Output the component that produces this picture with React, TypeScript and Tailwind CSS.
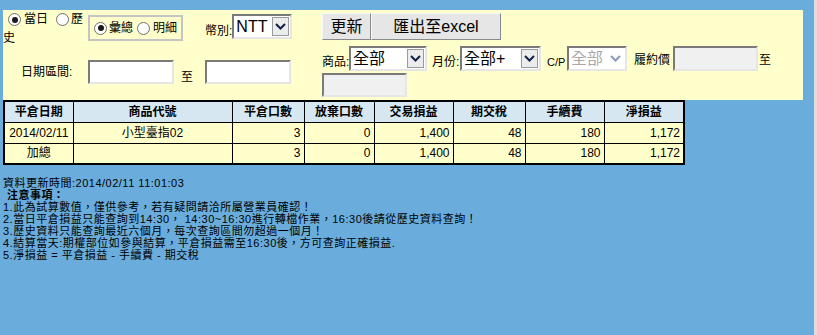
import React from "react";

function Radio({ checked }: { checked?: boolean }) {
  return (
    <span className="inline-flex w-[13px] h-[13px] rounded-full border border-[#6f6f6f] bg-white items-center justify-center align-middle shrink-0">
      {checked && <span className="w-[6px] h-[6px] rounded-full bg-[#1a1a1a]" />}
    </span>
  );
}

function Chevron({ color = "#10204a" }: { color?: string }) {
  return (
    <svg width="11" height="7" viewBox="0 0 11 7">
      <polyline points="1,1 5.5,5.5 10,1" fill="none" stroke={color} strokeWidth="2" />
    </svg>
  );
}

function Select({ w, value, disabled }: { w: string; value: string; disabled?: boolean }) {
  return (
    <div
      className={`${w} h-[25px] flex items-center bg-white border-2 border-t-[#7a7a7a] border-l-[#7a7a7a] border-b-[#e6e6e6] border-r-[#e6e6e6] shrink-0`}
    >
      <span className={`flex-1 pl-[2px] text-[16px] leading-[18px] whitespace-nowrap overflow-hidden ${disabled ? "text-[#a8a8a8]" : "text-black"}`}>
        {value}
      </span>
      {disabled ? (
        <span className="w-[17px] h-[19px] mr-[1px] flex items-center justify-center">
          <Chevron color="#8a9ab8" />
        </span>
      ) : (
        <span className="w-[17px] h-[19px] mr-[1px] flex items-center justify-center bg-[#ececec] border border-[#9a9a9a]">
          <Chevron />
        </span>
      )}
    </div>
  );
}

function TextInput({ w, disabled, h = "h-[24px]" }: { w: string; disabled?: boolean; h?: string }) {
  return (
    <div
      className={`${w} ${h} shrink-0 border-2 border-t-[#7a7a7a] border-l-[#7a7a7a] border-b-[#e6e6e6] border-r-[#e6e6e6] ${disabled ? "bg-[#f0f0f0]" : "bg-white"}`}
    />
  );
}

const headers = ["平倉日期", "商品代號", "平倉口數", "放棄口數", "交易損益", "期交稅", "手續費", "淨損益"];
const widths = ["w-[69px]", "w-[159px]", "w-[72px]", "w-[70px]", "w-[79px]", "w-[72px]", "w-[79px]", "w-[80px]"];
const rows = [
  ["2014/02/11", "小型臺指02", "3", "0", "1,400", "48", "180", "1,172"],
  ["加總", "", "3", "0", "1,400", "48", "180", "1,172"],
];

export default function App() {
  return (
    <div className="flex w-[817px] h-[335px] bg-[#6aaddc] font-['Liberation_Sans','Noto_Sans_CJK_TC',sans-serif] text-black overflow-hidden">
      <div className="flex-1 pl-[3px] pt-[10px]">
        {/* Query panel */}
        <div className="w-[800px] h-[90px] bg-[#ffffcc] flex text-[12px]">
          {/* Left column */}
          <div className="w-[319px] flex flex-col">
            <div className="flex items-start h-[32px]">
              <div className="w-[81px] leading-[19px] pl-[5px] text-[12px]">
                <Radio checked />
                <span className="ml-[3px]">當日</span>
                <span className="ml-[8px]"><Radio /></span>
                <span className="ml-[2px]">歷</span>
                <br />
                <span className="-ml-[5px]">史</span>
              </div>
              <div className="ml-[4px] mt-[5px] w-[95px] h-[26px] border-2 border-[#c4c4c4] flex items-center pl-[4px]">
                <Radio checked />
                <span className="ml-[2px] leading-[14px]">彙總</span>
                <span className="ml-[4px] flex"><Radio /></span>
                <span className="ml-[3px] leading-[14px]">明細</span>
              </div>
              <div className="ml-[22px] flex items-end mt-[4px]">
                <span className="pb-[1px] leading-[14px] whitespace-nowrap">幣別:</span>
                <Select w="w-[60px]" value="NTT" />
              </div>
            </div>
            <div className="flex items-end mt-[18px]">
              <span className="w-[85px] pl-[18px] leading-[14px] pb-[5px] whitespace-nowrap">日期區間:</span>
              <TextInput w="w-[86px]" />
              <span className="ml-[7px] w-[12px] leading-[14px]">至</span>
              <span className="ml-[12px]"><TextInput w="w-[86px]" /></span>
            </div>
          </div>
          {/* Right column */}
          <div className="flex-1 flex flex-col pt-[3px]">
            <div className="flex h-[27px]">
              <div className="w-[49px] h-[27px] bg-[#e6e6e6] border border-t-[#f8f8f8] border-l-[#f8f8f8] border-b-[#8a8a8a] border-r-[#8a8a8a] flex items-center justify-center text-[16px] leading-[18px]">
                更新
              </div>
              <div className="w-[130px] h-[27px] bg-[#e6e6e6] border border-t-[#f8f8f8] border-l-[#f8f8f8] border-b-[#8a8a8a] border-r-[#8a8a8a] flex items-center justify-center text-[16px] leading-[18px]">
                匯出至excel
              </div>
            </div>
            <div className="flex items-end mt-[6px]">
              <span className="w-[27px] shrink-0 leading-[14px] pb-[2px] whitespace-nowrap">商品:</span>
              <Select w="w-[78px]" value="全部" />
              <span className="ml-[5px] w-[28px] shrink-0 leading-[14px] pb-[2px] whitespace-nowrap">月份:</span>
              <Select w="w-[81px]" value="全部+" />
              <span className="ml-[6px] w-[20px] shrink-0 leading-[14px] pb-[2px] text-[11px] whitespace-nowrap">C/P</span>
              <Select w="w-[60px]" value="全部" disabled />
              <span className="ml-[7px] w-[36px] shrink-0 leading-[14px] pb-[4px] whitespace-nowrap">履約價</span>
              <span className="ml-[3px]"><TextInput w="w-[85px]" h="h-[25px]" disabled /></span>
              <span className="ml-[1px] leading-[14px] pb-[4px] whitespace-nowrap">至</span>
            </div>
            <div className="flex mt-[2px]">
              <TextInput w="w-[85px]" disabled />
            </div>
          </div>
        </div>

        {/* Result table */}
        <table className="border-collapse border-2 border-black w-[680px] text-[12px] table-fixed">
          <thead>
            <tr className="bg-[#d6e7f2] h-[21px]">
              {headers.map((h, i) => (
                <th key={i} className={`${widths[i]} border border-black font-bold text-center leading-[14px] p-0`}>
                  {h}
                </th>
              ))}
            </tr>
          </thead>
          <tbody>
            {rows.map((r, ri) => (
              <tr key={ri} className="bg-[#ffffcc] h-[21px]">
                {r.map((c, ci) => (
                  <td
                    key={ci}
                    className={`border border-black leading-[14px] p-0 ${ci < 2 ? "text-center" : "text-right pr-[3px]"}`}
                  >
                    {c}
                  </td>
                ))}
              </tr>
            ))}
          </tbody>
        </table>

        {/* Notes */}
        <div className="mt-[12px] text-[11px] tracking-[0.5px] leading-[12px] whitespace-nowrap">
          <div>資料更新時間:2014/02/11 11:01:03</div>
          <div className="pl-[4px] font-bold">注意事項：</div>
          <div>1.此為試算數值，僅供參考，若有疑問請洽所屬營業員確認！</div>
          <div>2.當日平倉損益只能查詢到14:30， 14:30~16:30進行轉檔作業，16:30後請從歷史資料查詢！</div>
          <div>3.歷史資料只能查詢最近六個月，每次查詢區間勿超過一個月！</div>
          <div>4.結算當天:期權部位如參與結算，平倉損益需至16:30後，方可查詢正確損益.</div>
          <div>5.淨損益 = 平倉損益 - 手續費 - 期交稅</div>
        </div>
      </div>
      <div className="w-[3px] h-full bg-[#dedede]" />
    </div>
  );
}
